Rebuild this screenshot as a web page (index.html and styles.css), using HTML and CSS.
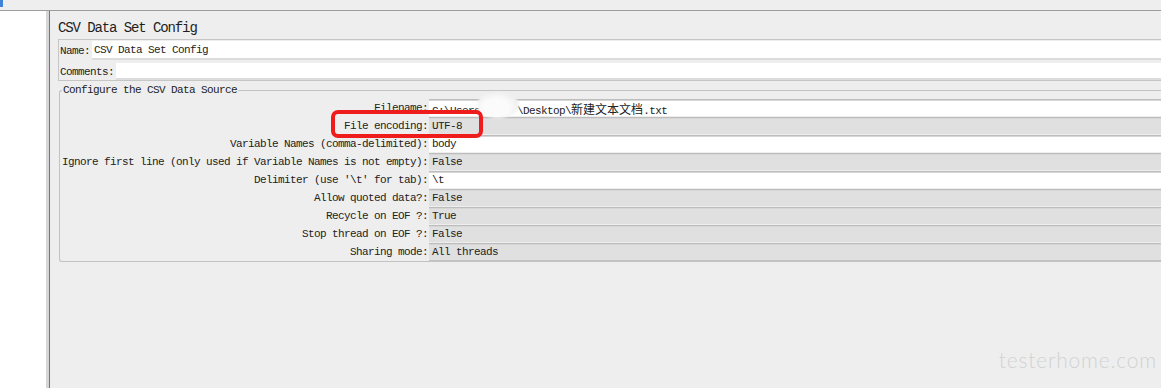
FILE: index.html
```html
<!DOCTYPE html>
<html lang="en">
<head>
    <meta charset="UTF-8">
    <title>CSV Data Set Config</title>
    <link rel="stylesheet" href="styles.css">
</head>
<body>
    <div class="topbar"><span class="mark"></span></div>

    <div class="workspace">
        <!-- test plan tree (empty in this view) -->
        <div class="tree"></div>

        <div class="panel">
            <h1 class="title">CSV Data Set Config</h1>

            <div class="namebox">
                <div class="field first">
                    <span class="caption">Name:</span>
                    <div class="input">CSV Data Set Config</div>
                </div>
                <div class="field second">
                    <span class="caption">Comments:</span>
                    <div class="input"></div>
                </div>
            </div>

            <fieldset class="source">
                <legend>Configure the CSV Data Source</legend>
                <div class="grid">
                    <span class="label">Filename:</span>
                    <div class="value text">C:\Users<span class="hidden-user"></span>\Desktop\<span class="cjk">新建文本文档</span>.txt</div>

                    <span class="label">File encoding:</span>
                    <div class="value combo">UTF-8</div>

                    <span class="label">Variable Names (comma-delimited):</span>
                    <div class="value text">body</div>

                    <span class="label">Ignore first line (only used if Variable Names is not empty):</span>
                    <div class="value combo">False</div>

                    <span class="label">Delimiter (use '\t' for tab):</span>
                    <div class="value text">\t</div>

                    <span class="label">Allow quoted data?:</span>
                    <div class="value combo">False</div>

                    <span class="label">Recycle on EOF ?:</span>
                    <div class="value combo">True</div>

                    <span class="label">Stop thread on EOF ?:</span>
                    <div class="value combo">False</div>

                    <span class="label">Sharing mode:</span>
                    <div class="value combo last">All threads</div>
                </div>
            </fieldset>
        </div>
    </div>

    <!-- screenshot annotations -->
    <div class="smudge"></div>
    <div class="highlight"></div>
    <div class="watermark">testerhome.com</div>
</body>
</html>
```

FILE: styles.css
```css
/* CSS */
html, body {
    height: 100%;
}

body {
    margin: 0;
    background-color: #eeeeee;
    font-family: "Liberation Mono", "DejaVu Sans Mono", monospace;
    font-size: 11px;
    letter-spacing: -0.6px;
    color: #222;
    overflow: hidden;
    position: relative;
}

.topbar {
    height: 10px;
    border-bottom: 1px solid #9d9d9d;
    position: relative;
}

.mark {
    position: absolute;
    left: 0;
    top: 0;
    width: 3px;
    height: 7px;
    background-color: #3f82d8;
}

.workspace {
    display: flex;
    height: 377px;
}

.tree {
    width: 46px;
    background-color: #fff;
    border-right: 3px solid #d6d6da;
}

.panel {
    flex: 1;
    border-left: 1px solid #767676;
    padding-left: 8px;
}

.title {
    margin: 0;
    padding-top: 7px;
    height: 20px;
    line-height: 20px;
    font-size: 14px;
    font-weight: normal;
    letter-spacing: -1.1px;
    color: #1e1e1e;
}

.namebox {
    margin-top: 1px;
    border: 1px solid #c6c6c6;
    border-right: none;
}

.field {
    display: flex;
    align-items: center;
}

.field.first {
    padding-top: 1px;
}

.field.second {
    padding-top: 3px;
}

.caption {
    padding: 0 2px 0 1px;
}

.input {
    flex: 1;
    background-color: #fff;
    border-bottom: 2px solid #dcdcdc;
    padding-left: 2px;
}

.field.first .input {
    height: 17px;
    line-height: 18px;
}

.field.second .input {
    height: 15px;
    line-height: 15px;
}

.source {
    margin: 2px 0 0 1px;
    padding: 0 0 0 2px;
    border: 1px solid #c2c2c2;
    border-right: none;
    border-radius: 3px 0 0 3px;
}

.source legend {
    padding: 0 1px;
    line-height: 14px;
    color: #222;
}

.grid {
    display: grid;
    grid-template-columns: auto 1fr;
    margin-top: 2px;
}

.label {
    text-align: right;
    line-height: 18px;
    padding-right: 1px;
}

.value {
    height: 16px;
    line-height: 17px;
    border-top: 1px solid #bdbdbd;
    box-shadow: inset 0 1px 0 #d6d6d6;
    padding-left: 3px;
    white-space: nowrap;
}

.value.text {
    background-color: #fff;
}

.value.combo {
    background-color: #e0e0e0;
}

.value.last {
    border-bottom: 1px solid #c2c2c2;
}

.hidden-user {
    display: inline-block;
    width: 37px;
}

.cjk {
    font-family: "Noto Sans CJK SC", sans-serif;
    letter-spacing: 0;
    font-size: 12px;
}

.smudge {
    position: absolute;
    left: 477px;
    top: 92px;
    width: 42px;
    height: 26px;
    border-radius: 50%;
    background: radial-gradient(ellipse at 45% 60%, #fbfbfb 40%, #ededed 75%, rgba(236, 236, 236, 0) 100%);
    filter: blur(1px);
}

.highlight {
    position: absolute;
    left: 331px;
    top: 110px;
    width: 152px;
    height: 28px;
    box-sizing: border-box;
    border: 4px solid #ef1c1c;
    border-radius: 7px;
}

.watermark {
    position: absolute;
    right: 4px;
    bottom: 16px;
    font-family: "Lato", sans-serif;
    font-weight: 300;
    font-size: 21px;
    letter-spacing: 0.8px;
    color: #d2d2d2;
}
```
